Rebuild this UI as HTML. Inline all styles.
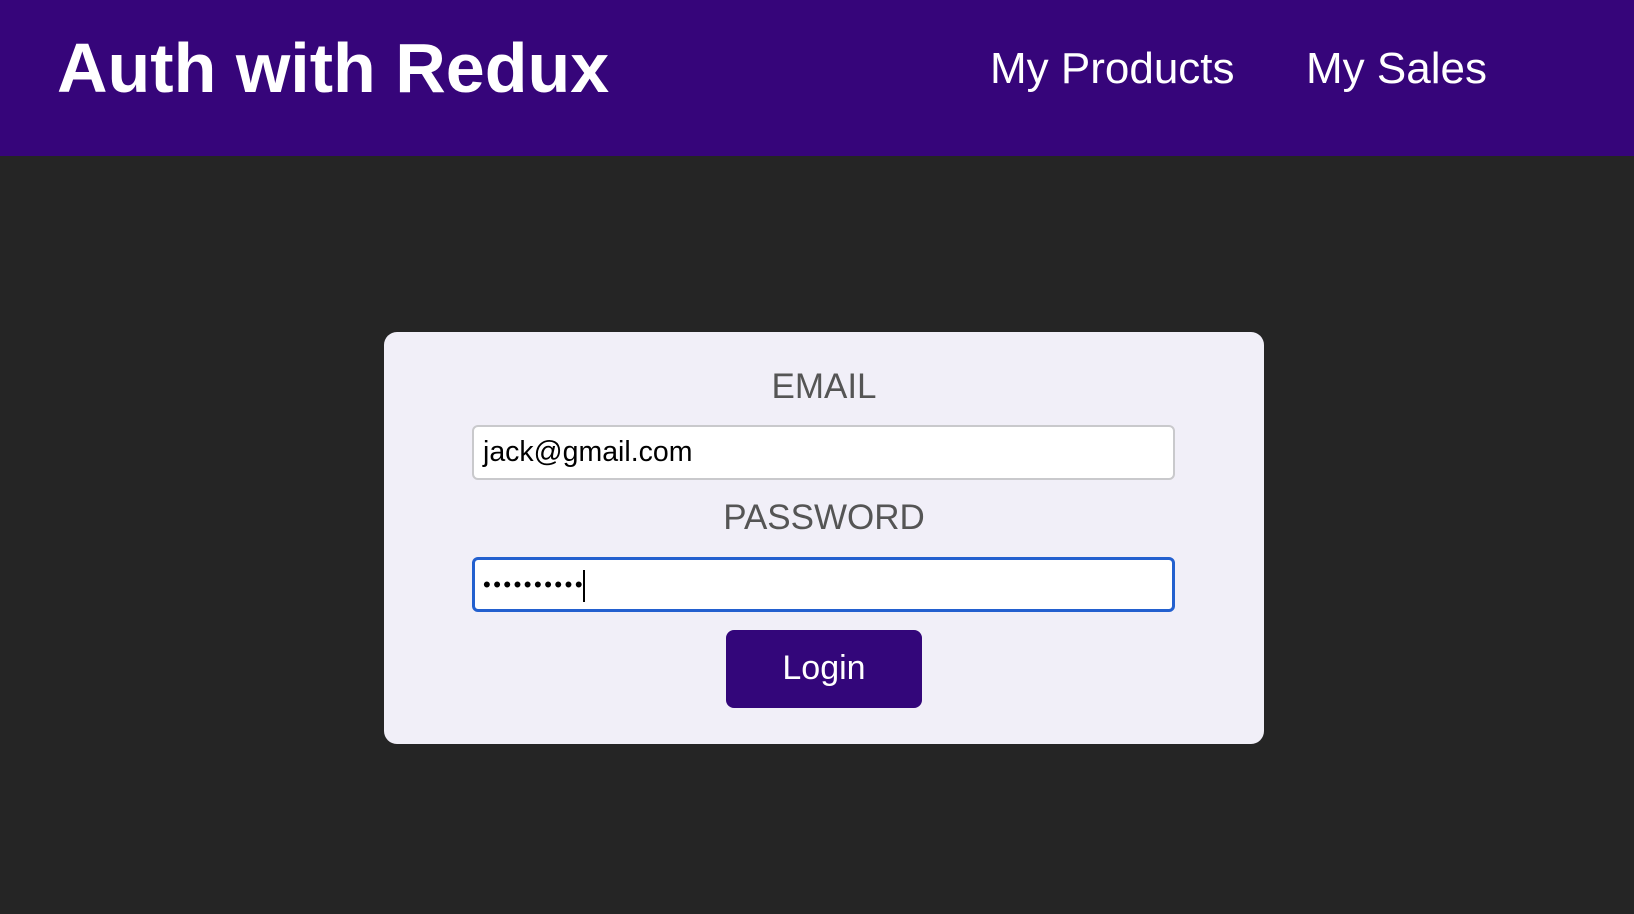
<!DOCTYPE html>
<html><head><style>
*{margin:0;padding:0;box-sizing:border-box}
body{width:1634px;height:914px;background:#252525;font-family:"Liberation Sans",Arial,sans-serif;position:relative;overflow:hidden}
.hdr{position:absolute;left:0;top:0;width:1634px;height:156px;background:#36057a}
.t{position:absolute;left:57px;top:28px;font-size:70px;font-weight:bold;color:#fff;line-height:80px}
.n{position:absolute;top:42px;font-size:44px;color:#fff;line-height:54px}
.card{position:absolute;left:384px;top:332px;width:880px;height:412px;background:#f1eff8;border-radius:13px}
.lbl{position:absolute;left:0;width:880px;text-align:center;font-size:35px;color:#555;line-height:40px}
.inp{position:absolute;left:88px;width:703px;height:55px;background:#fff;border:2px solid #c9c9cc;border-radius:6px;font-size:28.5px;padding-left:9px;line-height:51px;color:#000}
.pw{border:3px solid #2360cf;line-height:49px;padding-left:8px;font-size:22px;letter-spacing:2.5px}
.btn{position:absolute;left:342px;top:298px;width:196px;height:78px;background:#33067a;border-radius:8px;color:#fff;font-size:34px;text-align:center;line-height:76px}
</style></head><body>
<div class="hdr">
<div class="t">Auth with Redux</div>
<div class="n" style="left:990px">My Products</div>
<div class="n" style="left:1306px">My Sales</div>
</div>
<div class="card">
<div class="lbl" style="top:35px">EMAIL</div>
<div class="inp" style="top:93px">jack@gmail.com</div>
<div class="lbl" style="top:166px">PASSWORD</div>
<div class="inp pw" style="top:225px">••••••••••<span style="display:inline-block;width:2px;height:32px;background:#000;vertical-align:middle;margin-left:-2px"></span></div>
<div class="btn">Login</div>
</div>
</body></html>
